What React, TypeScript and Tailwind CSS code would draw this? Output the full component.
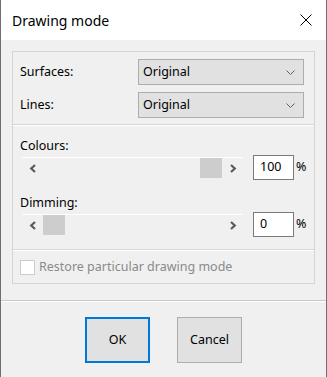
import React from "react";

const font = { fontFamily: '"Noto Sans", "Open Sans", sans-serif' };

function Chevron() {
  return (
    <svg width="9" height="5" viewBox="0 0 9 5" className="block">
      <path d="M0.5 0.5 L4.5 4.5 L8.5 0.5" fill="none" stroke="#606060" strokeWidth="1" />
    </svg>
  );
}

function Combo({ value }: { value: string }) {
  return (
    <div className="w-[166px] h-[26px] bg-[#e1e1e1] border border-[#adadad] flex items-center justify-between pl-[4px] pr-[8px] text-[12.5px] text-black">
      <span>{value}</span>
      <Chevron />
    </div>
  );
}

function Arrow({ dir }: { dir: "l" | "r" }) {
  return (
    <div className="w-[21px] h-[20px] flex items-center justify-center">
      <svg width="8" height="9" viewBox="0 0 8 9" className="block">
        <path
          d={dir === "l" ? "M6 1 L2.2 4.5 L6 8" : "M2 1 L5.8 4.5 L2 8"}
          fill="none"
          stroke="#5a5a5a"
          strokeWidth="2.2"
        />
      </svg>
    </div>
  );
}

function Scroll({ atEnd }: { atEnd: boolean }) {
  return (
    <div className="w-[221px] flex flex-col">
      <div className="h-px bg-white" />
      <div className="flex h-[20px]">
        <Arrow dir="l" />
        <div className={"flex-1 flex " + (atEnd ? "justify-end" : "justify-start")}>
          <div className="w-[22px] h-[20px] bg-[#cdcdcd]" />
        </div>
        <Arrow dir="r" />
      </div>
    </div>
  );
}

function ValueRow({ value, atEnd }: { value: string; atEnd: boolean }) {
  return (
    <div className="flex items-center h-[25px] pl-[9px]">
      <Scroll atEnd={atEnd} />
      <div className="ml-[10px] w-[41px] h-[25px] bg-white border border-[#7a7a7a] flex items-center pl-[6px] text-[12.5px] text-black">
        {value}
      </div>
      <span className="ml-[2px] text-[12.5px] text-black">%</span>
    </div>
  );
}

function Separator() {
  return (
    <div className="flex flex-col">
      <div className="h-px bg-[#d5d5d5]" />
      <div className="h-px bg-white" />
    </div>
  );
}

export default function App() {
  return (
    <div
      className="w-[327px] h-[377px] bg-[#f0f0f0] border-x border-[#6f6f6f] flex flex-col"
      style={font}
    >
      <div className="h-[40px] bg-white flex items-center justify-between pl-[11px] pr-[14px] shrink-0">
        <span className="text-[14px] text-black">Drawing mode</span>
        <svg width="12" height="12" viewBox="0 0 12 12" className="block">
          <path d="M0.5 0.5 L11.5 11.5 M11.5 0.5 L0.5 11.5" stroke="#000" strokeWidth="1" />
        </svg>
      </div>

      <div className="px-[11px] pt-[11px] pb-[16px]">
        <div className="w-[303px] h-[233px] border border-[#d5d5d5] flex flex-col">
          <div className="flex flex-col gap-[7px] pt-[7px] pb-[6px] pl-[7px]">
            <div className="flex items-center h-[26px]">
              <span className="w-[118px] text-[12.5px] text-black">Surfaces:</span>
              <Combo value="Original" />
            </div>
            <div className="flex items-center h-[26px]">
              <span className="w-[118px] text-[12.5px] text-black">Lines:</span>
              <Combo value="Original" />
            </div>
          </div>
          <Separator />
          <div className="flex flex-col pt-[12px] pb-[12px]">
            <div className="h-[17px] leading-[16px] pl-[7px] text-[12.5px] text-black">Colours:</div>
            <ValueRow value="100" atEnd={true} />
            <div className="mt-[15px] h-[17px] leading-[16px] pl-[7px] text-[12.5px] text-black">Dimming:</div>
            <ValueRow value="0" atEnd={false} />
          </div>
          <Separator />
          <div className="flex-1 flex items-center pl-[7px]">
            <div className="w-[15px] h-[15px] bg-white border border-[#cccccc]" />
            <span className="ml-[4px] text-[12.5px] text-[#8a8a8a]">Restore particular drawing mode</span>
          </div>
        </div>
      </div>

      <div className="flex flex-col">
        <div className="h-px bg-[#c8c8c8]" />
        <div className="h-px bg-white" />
      </div>

      <div className="pt-[15px] flex justify-center gap-[27px]">
        <div className="w-[65px] h-[46px] bg-[#e1e1e1] border-2 border-[#0078d7] flex items-center justify-center text-[12.5px] text-black">
          OK
        </div>
        <div className="w-[65px] h-[46px] bg-[#e1e1e1] border border-[#adadad] flex items-center justify-center text-[12.5px] text-black">
          Cancel
        </div>
      </div>
    </div>
  );
}
